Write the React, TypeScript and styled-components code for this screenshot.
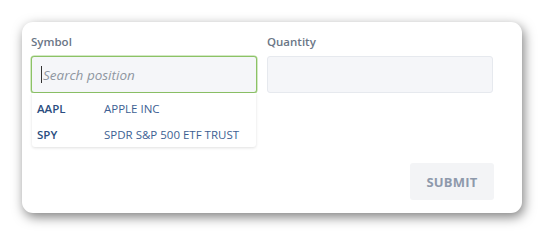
import React from "react";
import styled, { createGlobalStyle } from "styled-components";

const Global = createGlobalStyle`
  html, body { margin: 0; padding: 0; background: #ffffff; }
  body { font-family: "Open Sans", "Noto Sans", sans-serif; }
  * { box-sizing: border-box; }
`;

const Page = styled.div`
  width: 548px;
  height: 240px;
  padding: 22px 26px 27px 22px;
`;

const Card = styled.div`
  width: 500px;
  height: 191px;
  background: #ffffff;
  border-radius: 11px;
  box-shadow: 2px 4px 12px rgba(0, 0, 0, 0.5);
  padding: 12px 28px 13px 9px;
  display: flex;
  flex-direction: column;
`;

const Fields = styled.div`
  display: grid;
  grid-template-columns: 226px 226px;
  column-gap: 10px;
`;

const Field = styled.div`
  display: flex;
  flex-direction: column;
`;

const Label = styled.label`
  font-size: 11.5px;
  font-weight: 600;
  color: #6b7686;
  line-height: 15px;
  margin-bottom: 7px;
`;

const InputWrap = styled.div`
  position: relative;
`;

const InputBox = styled.div<{ $focused?: boolean }>`
  height: 37px;
  border-radius: 3px;
  background: #f5f6f9;
  border: 1px solid ${(p) => (p.$focused ? "#8cc266" : "#e6e9ee")};
  box-shadow: ${(p) => (p.$focused ? "0 0 0 0.5px #a8d48a" : "none")};
  display: flex;
  align-items: center;
  padding-left: 9px;
`;

const Caret = styled.span`
  width: 1px;
  height: 17px;
  background: #333;
  margin-right: 1px;
`;

const Placeholder = styled.span`
  font-style: italic;
  font-size: 13.5px;
  color: #8f96a1;
`;

const Dropdown = styled.div`
  position: absolute;
  top: 100%;
  left: 1px;
  right: 1px;
  background: #ffffff;
  box-shadow: 0 1px 3px rgba(0, 0, 0, 0.12);
  border-radius: 0 0 3px 3px;
  padding: 2px 0 0;
`;

const Row = styled.div`
  display: grid;
  grid-template-columns: 67px 1fr;
  height: 26px;
  align-items: center;
  padding-left: 5px;
  font-size: 11.5px;
`;

const Sym = styled.span`
  font-weight: 600;
  color: #2b4d80;
`;

const Name = styled.span`
  color: #3d5f93;
`;

const Footer = styled.div`
  margin-top: auto;
  display: flex;
  justify-content: flex-end;
`;

const Button = styled.button`
  width: 84px;
  height: 37px;
  border: none;
  border-radius: 3px;
  background: #f3f4f6;
  color: #8e99ab;
  font-family: "Open Sans", "Noto Sans", sans-serif;
  font-weight: 700;
  font-size: 13px;
  letter-spacing: 0.2px;
  padding: 0;
  cursor: default;
`;

export default function App() {
  return (
    <>
      <Global />
      <Page>
        <Card>
          <Fields>
            <Field>
              <Label>Symbol</Label>
              <InputWrap>
                <InputBox $focused>
                  <Caret />
                  <Placeholder>Search position</Placeholder>
                </InputBox>
                <Dropdown>
                  <Row>
                    <Sym>AAPL</Sym>
                    <Name>APPLE INC</Name>
                  </Row>
                  <Row>
                    <Sym>SPY</Sym>
                    <Name>SPDR S&amp;P 500 ETF TRUST</Name>
                  </Row>
                </Dropdown>
              </InputWrap>
            </Field>
            <Field>
              <Label>Quantity</Label>
              <InputBox />
            </Field>
          </Fields>
          <Footer>
            <Button>SUBMIT</Button>
          </Footer>
        </Card>
      </Page>
    </>
  );
}
